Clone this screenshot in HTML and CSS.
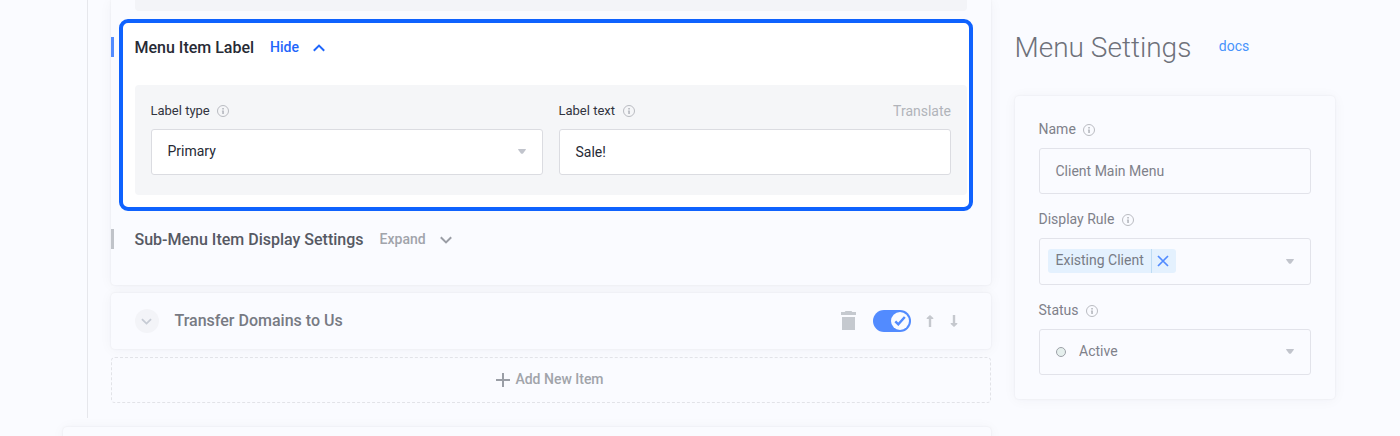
FILE: index.html
```html
<!DOCTYPE html>
<html lang="en">
<head>
<meta charset="utf-8">
<title>Menu Settings</title>
<link rel="stylesheet" href="styles.css">
</head>
<body>
<svg class="defs" width="0" height="0">
  <symbol id="info" viewBox="0 0 12 12"><circle cx="6" cy="6" r="5.5" fill="none" stroke="currentColor"/><path d="M5.2 3h1.7v1.6H5.2zM4.9 5.4h2V9H5.2V6.4h-.3z" fill="currentColor"/></symbol>
  <symbol id="caret" viewBox="0 0 8 5"><path d="M.6 0h6.8q.8 0 .4.8L5 4.4q-1 .9-2 0L.2.8Q-.2 0 .6 0z" fill="currentColor"/></symbol>
  <symbol id="chevron" viewBox="0 0 12 8"><path d="M.8 1.2L6 6.4l5.2-5.2" fill="none" stroke="currentColor" stroke-width="2"/></symbol>
</svg>
<div class="page">
  <main class="main">
    <div class="tree">
      <section class="card item">
        <div class="previous"></div>
        <div class="row">
          <span class="marker marker-on"></span>
          <div class="highlight">
            <header class="head">
              <h3 class="heading">Menu Item Label</h3>
              <a class="toggle toggle-on">Hide</a>
              <svg class="chevron up"><use href="#chevron"/></svg>
            </header>
            <div class="panel">
              <div class="field">
                <div class="label">Label type <svg class="info"><use href="#info"/></svg></div>
                <div class="control strong">Primary <svg class="caret"><use href="#caret"/></svg></div>
              </div>
              <div class="field">
                <div class="label">Label text <svg class="info"><use href="#info"/></svg><span class="translate">Translate</span></div>
                <div class="control strong typed">Sale!</div>
              </div>
            </div>
          </div>
        </div>
        <div class="row second">
          <span class="marker"></span>
          <h3 class="heading muted">Sub-Menu Item Display Settings</h3>
          <a class="toggle">Expand</a>
          <svg class="chevron down"><use href="#chevron"/></svg>
        </div>
      </section>
      <section class="card transfer">
        <span class="round"><svg class="chevron small"><use href="#chevron"/></svg></span>
        <h3 class="heading light">Transfer Domains to Us</h3>
        <svg class="trash" viewBox="0 0 15 19"><path d="M4.5 0h6l.8 1H15v3H0V1h3.7zM1 6h13v13H1z" fill="#c5c9cf"/></svg>
        <span class="switch"><span class="knob"><svg viewBox="0 0 12 10" width="12" height="10"><path d="M1.3 5.3l3 3L10.8 1" fill="none" stroke="#528bff" stroke-width="2.4"/></svg></span></span>
        <svg class="arrow" viewBox="0 0 8 12"><path d="M2.8 12V4H.7V3L4 0l3.3 3v1H5.2v8z" fill="#c5c8ce"/></svg>
        <svg class="arrow" viewBox="0 0 8 12"><path d="M2.8 0v8H.7v1L4 12l3.3-3V8H5.2V0z" fill="#c5c8ce"/></svg>
      </section>
      <div class="add">
        <svg class="plus" viewBox="0 0 14 14"><path d="M7 0v14M0 7h14" stroke="#9a9ea6" stroke-width="2"/></svg>
        Add New Item
      </div>
    </div>
    <section class="card next"></section>
  </main>
  <aside class="side">
    <header class="side-head"><h2 class="title">Menu Settings</h2><a class="docs">docs</a></header>
    <section class="card settings">
      <div class="label big">Name <svg class="info"><use href="#info"/></svg></div>
      <div class="control name">Client Main Menu</div>
      <div class="label big gap">Display Rule <svg class="info"><use href="#info"/></svg></div>
      <div class="control rule">
        <span class="tag"><span class="tag-text">Existing Client</span><span class="close"><svg viewBox="0 0 12 12" width="12" height="12"><path d="M1 1l10 10M11 1L1 11" stroke="#528bff" stroke-width="1.7"/></svg></span></span>
        <svg class="caret"><use href="#caret"/></svg>
      </div>
      <div class="label big gap">Status <svg class="info"><use href="#info"/></svg></div>
      <div class="control"><span class="dot"></span>Active <svg class="caret"><use href="#caret"/></svg></div>
    </section>
  </aside>
</div>
</body>
</html>
```
FILE: styles.css
```css
* { box-sizing: border-box; }
body { margin: 0; background: #fafbff; font-family: Roboto, sans-serif; font-size: 14px; color: #7f818a; overflow: hidden; }
svg { flex: none; display: block; }
.defs { position: absolute; }
h2, h3 { margin: 0; }
.page { display: flex; gap: 24px; width: 1400px; height: 436px; padding-left: 63px; overflow: hidden; }
.main { width: 928px; flex: none; }
.tree { margin-left: 24px; height: 418px; padding-left: 23px; border-left: 1px solid #e6e7ec; }
.card { background: #fafbff; border-radius: 4px; box-shadow: 0 0 2px rgba(40, 45, 60, .09), 0 1px 14px rgba(40, 45, 60, .045); }
.item { height: 285px; border-radius: 0 0 4px 4px; }
.previous { height: 11px; margin: 0 24px; background: #f3f4f8; border-radius: 0 0 4px 4px; }
.row { display: flex; gap: 5px; padding-top: 8px; }
.marker { flex: none; width: 3px; height: 20px; background: #c0c3c9; }
.marker-on { margin-top: 18px; background: #528bff; }
.highlight { width: 854px; height: 192px; flex: none; border: 4px solid #0f62fe; border-radius: 9px; background: #fff; padding: 12px 2px 0 12px; }
.head { display: flex; align-items: center; height: 24px; }
.heading { font-size: 16px; line-height: 24px; font-weight: 500; color: #272a35; margin-left: -.5px; }
.head .heading { padding-top: 2px; }
.toggle { font-weight: 500; line-height: 20px; margin-left: 16px; color: #a1a4ab; }
.toggle-on { color: #1f66fb; }
.chevron { width: 12px; height: 8px; }
.up { margin-left: 14px; color: #1f66fb; transform: rotate(180deg); margin-top: 2px; }
.panel { margin-top: 26px; display: flex; gap: 16px; height: 110px; padding: 16px; background: #f5f6f8; border-radius: 4px; }
.field { width: 392px; }
.label { display: flex; align-items: center; height: 20px; padding-bottom: 2px; font-size: 13px; color: #31343e; text-indent: -.5px; }
.info { width: 12px; height: 12px; margin: 2px 0 0 7.5px; color: #b9bbc1; }
.translate { margin: 2px 0 0 auto; font-size: 14px; color: #b1b4ba; }
.control { display: flex; align-items: center; height: 46px; padding: 0 16.5px 2px 15.5px; border: 1px solid #e2e3ea; border-radius: 3px; line-height: 20px; color: #7f818a; }
.field .control { margin-top: 8px; background: #fff; border-color: #dbdce1; }
.strong { color: #272a35; }
.field .typed, .settings .name { padding-bottom: 0; }
.caret { width: 8px; height: 5px; margin: 1px 0 0 auto; color: #c1c4cc; }
.second { align-items: center; gap: 0; padding-top: 18px; height: 38px; }
.second .heading { margin-left: 20.5px; padding-top: 2px; }
.muted { color: #565963; }
.down { margin-left: 14px; margin-top: 2px; color: #9a9da5; }
.transfer { display: flex; align-items: center; height: 56px; margin-top: 8px; padding: 0 33px 0 24px; }
.round { display: grid; place-items: center; width: 24px; height: 24px; border-radius: 50%; background: #f3f4f8; margin-right: 16px; }
.small { width: 11px; height: 7px; color: #c6cbd4; margin: 1px 1px 0 0; }
.light { color: #777a83; margin-right: auto; }
.trash { width: 15px; height: 19px; margin-top: -1px; }
.switch { display: flex; align-items: center; justify-content: flex-end; width: 38px; height: 22px; padding: 2px; margin: 0 15px 0 17px; border-radius: 11px; background: #528bff; }
.knob { display: grid; place-items: center; width: 18px; height: 18px; background: #fafbff; border-radius: 50%; }
.arrow { width: 8px; height: 12px; }
.arrow + .arrow { margin-left: 16px; }
.add { display: flex; align-items: center; justify-content: center; gap: 5px; height: 46px; margin-top: 8px; padding: 0 2px 2px 0; border: 1px dashed #e2e3e8; border-radius: 4px; font-weight: 500; color: #a1a4aa; }
.plus { width: 14px; height: 14px; margin-top: 1px; }
.next { height: 40px; margin-top: 9px; }
.side { width: 320px; flex: none; }
.side-head { display: flex; align-items: center; height: 96px; }
.title { font-size: 28px; line-height: 40px; font-weight: 300; color: #6e717a; margin-left: -.5px; }
.docs { margin-left: 27.5px; margin-top: -5px; color: #4793fc; }
.settings { height: 303px; padding: 24px; }
.big { font-size: 14px; color: #7f818a; }
.settings .control { margin-top: 8px; }
.gap { margin-top: 16px; }
.settings .rule { height: 47px; padding-left: 8px; }
.tag { display: flex; width: 128px; height: 24px; border-radius: 3px; background: #e4f1fe; overflow: hidden; color: #777b85; }
.tag-text { width: 103px; padding: 1px 0 1px 7.5px; white-space: nowrap; }
.close { display: grid; place-items: center; width: 25px; padding-right: 2px; border-left: 1px solid #bedcf4; }
.dot { width: 10px; height: 10px; border: 1.5px solid #9da1a8; border-radius: 50%; background: #e5efed; margin: 2px 13px 0 .5px; }
```
